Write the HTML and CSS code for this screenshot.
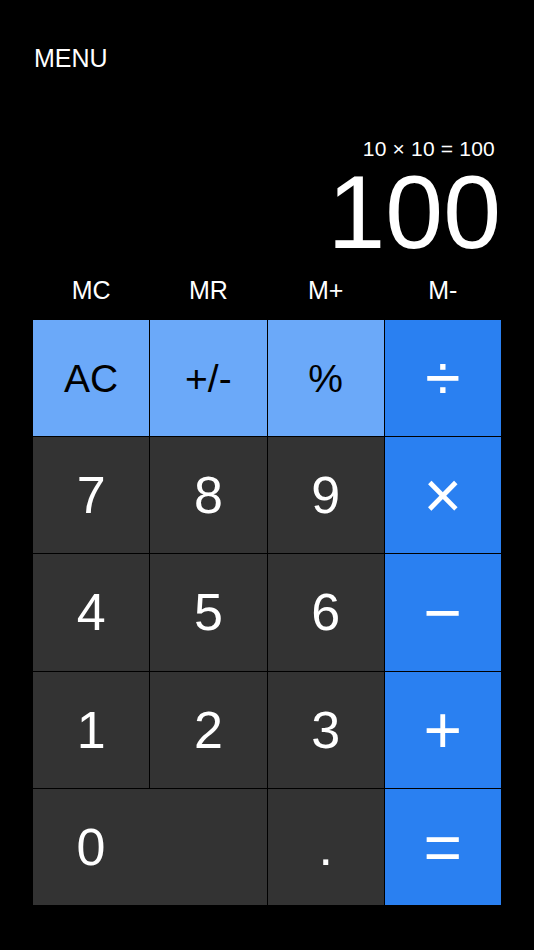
FILE: index.html
```html
<!DOCTYPE html>
<html>
<head>
<meta charset="utf-8">
<link rel="stylesheet" href="styles.css">
</head>
<body>
<div class="app">
  <div class="menu">MENU</div>
  <div class="expr">10 × 10 = 100</div>
  <div class="result">100</div>
  <div class="memory">
    <div class="mem">MC</div>
    <div class="mem">MR</div>
    <div class="mem">M+</div>
    <div class="mem">M-</div>
  </div>
  <div class="keys">
    <div class="key fn">AC</div>
    <div class="key fn">+/-</div>
    <div class="key fn">%</div>
    <div class="key op div">÷</div>
    <div class="key num">7</div>
    <div class="key num">8</div>
    <div class="key num">9</div>
    <div class="key op mul">×</div>
    <div class="key num">4</div>
    <div class="key num">5</div>
    <div class="key num">6</div>
    <div class="key op">−</div>
    <div class="key num">1</div>
    <div class="key num">2</div>
    <div class="key num">3</div>
    <div class="key op">+</div>
    <div class="key num zero"><span class="zero-label">0</span></div>
    <div class="key num">.</div>
    <div class="key op">=</div>
  </div>
</div>
</body>
</html>
```
FILE: styles.css
```css
html, body {
  margin: 0;
  padding: 0;
  background: #000;
}
body {
  font-family: "Liberation Sans", Arial, sans-serif;
  color: #fff;
  width: 534px;
  height: 950px;
  overflow: hidden;
}
.app {
  padding: 0 33px;
}
.menu {
  font-size: 25px;
  line-height: 25px;
  padding-top: 46px;
  margin-left: 1px;
}
.expr {
  margin-top: 68px;
  font-size: 21px;
  line-height: 20px;
  text-align: right;
  padding-right: 6px;
  letter-spacing: 0.2px;
}
.result {
  margin-top: 1px;
  font-size: 104px;
  line-height: 104px;
  text-align: right;
}
.memory {
  margin-top: 14px;
  margin-bottom: 17px;
  display: grid;
  grid-template-columns: repeat(4, 1fr);
  gap: 1px;
}
.mem {
  font-size: 25px;
  line-height: 25px;
  text-align: center;
}
.keys {
  display: grid;
  grid-template-columns: repeat(4, 1fr);
  grid-auto-rows: 116.2px;
  gap: 1px;
  background: #000;
}
.key {
  display: flex;
  align-items: center;
  justify-content: center;
  line-height: 1;
}
.fn {
  background: #6ba9f9;
  color: #000;
  font-size: 39px;
}
.num {
  background: #333333;
  color: #fff;
  font-size: 52px;
}
.op {
  background: #2a80f1;
  color: #fff;
  font-size: 66px;
}
.op.div {
  font-size: 64px;
}
.zero {
  grid-column: span 2;
  justify-content: flex-start;
}
.zero-label {
  width: 116px;
  text-align: center;
}
```
